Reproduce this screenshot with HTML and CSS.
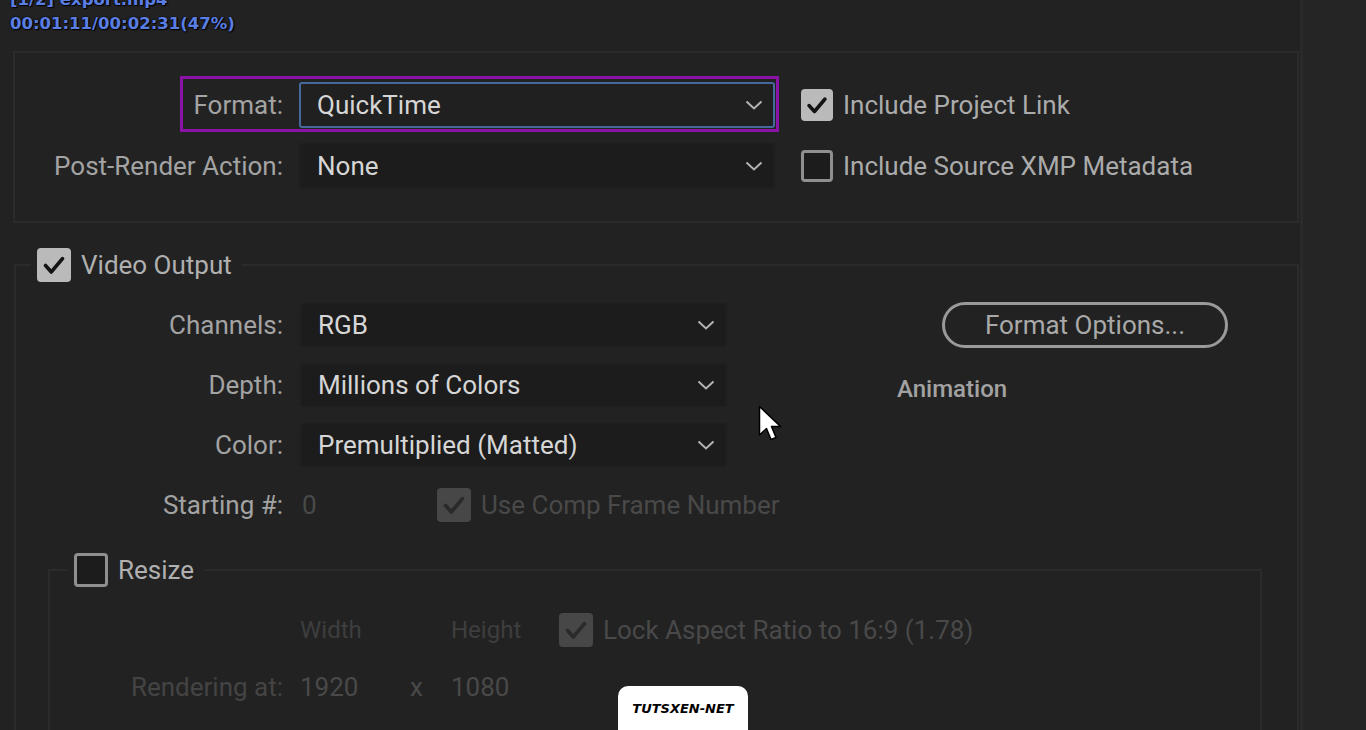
FILE: index.html
```html
<!DOCTYPE html>
<html lang="en">
<head>
<meta charset="utf-8">
<title>Output Module Settings</title>
<link rel="stylesheet" href="styles.css">
</head>
<body>
<div class="app">
  <div class="main">
    <div class="status">
      <div>[1/2] export.mp4</div>
      <div>00:01:11/00:02:31(47%)</div>
    </div>

    <section class="panel-top">
      <div class="top-grid">
        <div class="label">Format:</div>
        <div class="select focused"><span>QuickTime</span>
          <svg class="chev" viewBox="0 0 18 10"><polyline points="1.5,1.5 9,8.5 16.5,1.5"/></svg></div>
        <div class="check-label"><span class="cb on"><svg viewBox="0 0 32 32"><polyline points="8,16.5 13.5,22.5 24,10"/></svg></span>Include Project Link</div>

        <div class="label">Post-Render Action:</div>
        <div class="select"><span>None</span>
          <svg class="chev" viewBox="0 0 18 10"><polyline points="1.5,1.5 9,8.5 16.5,1.5"/></svg></div>
        <div class="check-label"><span class="cb off"></span>Include Source XMP Metadata</div>
      </div>
      <div class="highlight"></div>
    </section>

    <fieldset class="video">
      <legend class="legend"><span class="cb on big"><svg viewBox="0 0 32 32"><polyline points="8,16.5 13.5,22.5 24,10"/></svg></span>Video Output</legend>
      <div class="video-grid">
        <div class="label">Channels:</div>
        <div class="select small"><span>RGB</span>
          <svg class="chev" viewBox="0 0 18 10"><polyline points="1.5,1.5 9,8.5 16.5,1.5"/></svg></div>
        <div class="side-cell"><button class="fmt-btn">Format Options...</button></div>

        <div class="label">Depth:</div>
        <div class="select small"><span>Millions of Colors</span>
          <svg class="chev" viewBox="0 0 18 10"><polyline points="1.5,1.5 9,8.5 16.5,1.5"/></svg></div>
        <div class="side-cell"><span class="codec">Animation</span></div>

        <div class="label">Color:</div>
        <div class="select small"><span>Premultiplied (Matted)</span>
          <svg class="chev" viewBox="0 0 18 10"><polyline points="1.5,1.5 9,8.5 16.5,1.5"/></svg></div>
        <div></div>

        <div class="label">Starting #:</div>
        <div class="start-cell"><span class="dim zero">0</span>
          <span class="check-label dim"><span class="cb dimbox big"><svg viewBox="0 0 32 32"><polyline points="8,16.5 13.5,22.5 24,10"/></svg></span>Use Comp Frame Number</span></div>
        <div></div>
      </div>

      <fieldset class="resize">
        <legend class="legend"><span class="cb off big"></span>Resize</legend>
        <div class="resize-grid">
          <div></div>
          <div class="head">Width</div>
          <div class="head">Height</div>
          <div class="check-label dim"><span class="cb dimbox big"><svg viewBox="0 0 32 32"><polyline points="8,16.5 13.5,22.5 24,10"/></svg></span>Lock Aspect Ratio to 16:9 (1.78)</div>

          <div class="label faint">Rendering at:</div>
          <div class="wcell"><span>1920</span><span class="times">x</span></div>
          <div class="dim">1080</div>
          <div></div>
        </div>
      </fieldset>
    </fieldset>
  </div>
  <div class="side"></div>

  <svg class="pointer" viewBox="0 0 24 38"><path d="M1.5 1.5 L1.5 30 L8.5 23.5 L13 34.5 L18 32.5 L13.5 21.5 L22.5 21.5 Z"/></svg>
  <div class="watermark">TUTSXEN-NET</div>
</div>
</body>
</html>
```

FILE: styles.css
```css
* { box-sizing: border-box; }

html, body {
  margin: 0;
  height: 730px;
  overflow: hidden;
}

body {
  background: #222222;
  font-family: Roboto, "Liberation Sans", sans-serif;
  font-size: 26px;
  color: #a6a6a6;
}

.app {
  position: relative;
  display: flex;
  height: 730px;
}

.main {
  width: 1300px;
  flex: none;
}

.side {
  flex: 1;
  background: #252525;
  border-left: 3px solid #2a2a2a;
}

/* status text */
.status {
  margin-top: -12px;
  padding-left: 10px;
  height: 48px;
  font: bold 16.5px/24px "DejaVu Sans", Verdana, sans-serif;
  color: #5b7ee4;
  text-shadow: 0 0 2px #000, 1px 1px 1px #000;
}

/* top panel */
.panel-top {
  position: relative;
  margin: 15px 1px 0 13px;
  border: 2px solid #2b2b2b;
  padding: 29px 0 32px 0;
}

.top-grid {
  display: grid;
  grid-template-columns: 268px 476px auto;
  grid-auto-rows: 46px;
  column-gap: 16px;
  row-gap: 15px;
  align-items: center;
}

.label {
  text-align: right;
  color: #a3a3a3;
  white-space: nowrap;
}

.select {
  height: 46px;
  display: flex;
  align-items: center;
  padding: 0 10px 0 16px;
  background: #1c1c1c;
  border: 2px solid #1e1e1e;
  border-radius: 3px;
  color: #d6d6d6;
  white-space: nowrap;
}

.select.focused {
  border-color: #44699a;
  background: #202020;
}

.select.small {
  height: 44px;
}

.chev {
  margin-left: auto;
  width: 18px;
  height: 10px;
  fill: none;
  stroke: #b4b4b4;
  stroke-width: 2;
}

.check-label {
  display: flex;
  align-items: center;
  gap: 10px;
  color: #ababab;
  white-space: nowrap;
}

.top-grid .check-label {
  margin-left: 10px;
}

.cb {
  width: 32px;
  height: 32px;
  border-radius: 4px;
  flex: none;
  display: block;
}

.cb.big {
  width: 34px;
  height: 34px;
}

.cb svg {
  width: 100%;
  height: 100%;
  display: block;
  fill: none;
  stroke: #141414;
  stroke-width: 3.5;
  stroke-linecap: round;
  stroke-linejoin: round;
}

.cb.on {
  background: #bababa;
}

.cb.off {
  border: 3px solid #8f8f8f;
  background: #1c1c1c;
}

.cb.dimbox {
  background: #474747;
}

.cb.dimbox svg {
  stroke: #2a2a2a;
}

.highlight {
  position: absolute;
  left: 165px;
  top: 23px;
  width: 599px;
  height: 56px;
  border: 3px solid #8b12a6;
}

/* video fieldset */
fieldset {
  margin: 0;
  padding: 0;
  min-width: 0;
}

.video {
  margin: 25px 1px 0 14px;
  border: 2px solid #2b2b2b;
  border-bottom: none;
}

.legend {
  display: flex;
  align-items: center;
  gap: 10px;
  height: 34px;
  margin-left: 15px;
  padding: 0 10px 0 6px;
  color: #b0b0b0;
}

.video-grid {
  display: grid;
  grid-template-columns: 267px 427px 1fr;
  grid-auto-rows: 44px;
  column-gap: 17px;
  row-gap: 16px;
  padding-top: 21px;
  align-items: center;
}

.side-cell {
  display: flex;
  align-items: center;
}

.fmt-btn {
  margin-left: 198px;
  width: 286px;
  height: 46px;
  border: 3px solid #9a9a9a;
  border-radius: 23px;
  background: transparent;
  color: #a9a9a9;
  font: 26px Roboto, "Liberation Sans", sans-serif;
  padding: 0;
}

.codec {
  margin-left: 153px;
  padding-top: 8px;
  font-size: 24px;
  font-weight: 500;
  color: #a2a2a2;
}

.start-cell {
  display: flex;
  align-items: center;
}

.dim {
  color: #494949;
}

.zero {
  flex: none;
  width: 137px;
  padding-left: 2px;
}

/* resize */
.resize {
  margin: 26px 35px 0 32px;
  border: 2px solid #2b2b2b;
  border-bottom: none;
  height: 300px;
}

.resize .legend {
  margin-left: 18px;
}

.resize-grid {
  display: grid;
  grid-template-columns: 250px 151px 108px 1fr;
  grid-auto-rows: 34px;
  row-gap: 23px;
  padding-top: 26px;
  align-items: center;
}

.resize-grid .label {
  padding-right: 17px;
}

.head {
  font-size: 24px;
  color: #3e3e3e;
}

.faint {
  color: #444444;
}

.wcell {
  display: flex;
  color: #494949;
}

.times {
  margin-left: auto;
  margin-right: 28px;
}

/* overlays */
.pointer {
  position: absolute;
  left: 758px;
  top: 405px;
  width: 24px;
  height: 38px;
  fill: #ffffff;
  stroke: #000000;
  stroke-width: 1.5;
  stroke-linejoin: round;
}

.watermark {
  position: absolute;
  left: 618px;
  top: 686px;
  width: 130px;
  height: 44px;
  background: #ffffff;
  border-radius: 10px 10px 0 0;
  display: flex;
  align-items: center;
  justify-content: center;
  font: italic bold 13px "DejaVu Sans", sans-serif;
  color: #000000;
}
```
